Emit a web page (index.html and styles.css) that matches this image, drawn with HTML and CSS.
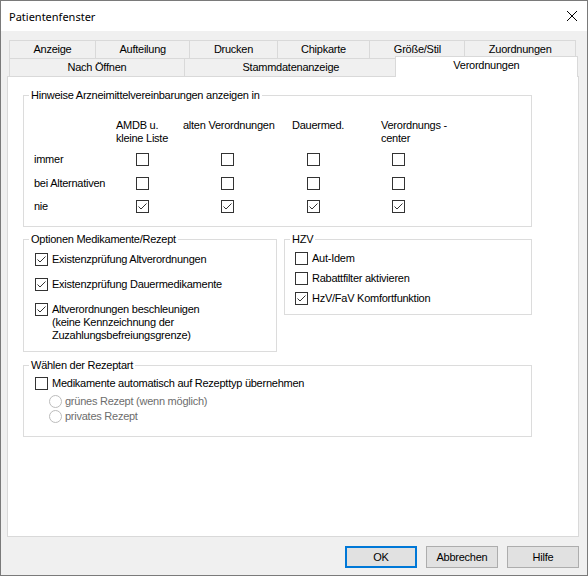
FILE: index.html
```html
<!DOCTYPE html>
<html>
<head>
  <title>Patientenfenster</title>
  <link rel="stylesheet" href="styles.css">
</head>
<body>
  <div class="window">
    <div class="titlebar">
      <span class="title">Patientenfenster</span>
      <svg class="close" viewBox="0 0 10 10"><path d="M0 0 L10 10 M10 0 L0 10"/></svg>
    </div>

    <div class="client">
      <div class="tabs">
        <div class="tab-row">
          <div class="tab">Anzeige</div>
          <div class="tab">Aufteilung</div>
          <div class="tab">Drucken</div>
          <div class="tab">Chipkarte</div>
          <div class="tab">Größe/Stil</div>
          <div class="tab">Zuordnungen</div>
        </div>
        <div class="tab-row">
          <div class="tab">Nach Öffnen</div>
          <div class="tab">Stammdatenanzeige</div>
          <div class="tab selected">Verordnungen</div>
        </div>
      </div>

      <div class="panel">
        <div class="sheet">
          <fieldset class="group">
            <legend>Hinweise Arzneimittelvereinbarungen anzeigen in</legend>
            <div class="matrix">
              <div></div>
              <div class="head">AMDB u.<br>kleine Liste</div>
              <div class="head">alten Verordnungen</div>
              <div class="head">Dauermed.</div>
              <div class="head">Verordnungs -<br>center</div>

              <div class="row-label">immer</div>
              <span class="cb c1"></span>
              <span class="cb c2"></span>
              <span class="cb c3"></span>
              <span class="cb c4"></span>

              <div class="row-label">bei Alternativen</div>
              <span class="cb c1"></span>
              <span class="cb c2"></span>
              <span class="cb c3"></span>
              <span class="cb c4"></span>

              <div class="row-label">nie</div>
              <span class="cb c1"><svg viewBox="0 0 11 11"><path d="M1.5 5.5 L4 8 L9.5 2.5"/></svg></span>
              <span class="cb c2"><svg viewBox="0 0 11 11"><path d="M1.5 5.5 L4 8 L9.5 2.5"/></svg></span>
              <span class="cb c3"><svg viewBox="0 0 11 11"><path d="M1.5 5.5 L4 8 L9.5 2.5"/></svg></span>
              <span class="cb c4"><svg viewBox="0 0 11 11"><path d="M1.5 5.5 L4 8 L9.5 2.5"/></svg></span>
            </div>
          </fieldset>

          <div class="split">
            <fieldset class="group optionen">
              <legend>Optionen Medikamente/Rezept</legend>
              <div class="opts">
                <label class="opt">
                  <span class="cb"><svg viewBox="0 0 11 11"><path d="M1.5 5.5 L4 8 L9.5 2.5"/></svg></span>
                  <span class="text">Existenzprüfung Altverordnungen</span>
                </label>
                <label class="opt">
                  <span class="cb"><svg viewBox="0 0 11 11"><path d="M1.5 5.5 L4 8 L9.5 2.5"/></svg></span>
                  <span class="text">Existenzprüfung Dauermedikamente</span>
                </label>
                <label class="opt">
                  <span class="cb"><svg viewBox="0 0 11 11"><path d="M1.5 5.5 L4 8 L9.5 2.5"/></svg></span>
                  <span class="text">Altverordnungen beschleunigen<br>(keine Kennzeichnung der<br>Zuzahlungsbefreiungsgrenze)</span>
                </label>
              </div>
            </fieldset>

            <fieldset class="group hzv">
              <legend>HZV</legend>
              <div class="opts tight">
                <label class="opt">
                  <span class="cb"></span>
                  <span class="text">Aut-Idem</span>
                </label>
                <label class="opt">
                  <span class="cb"></span>
                  <span class="text">Rabattfilter aktivieren</span>
                </label>
                <label class="opt">
                  <span class="cb"><svg viewBox="0 0 11 11"><path d="M1.5 5.5 L4 8 L9.5 2.5"/></svg></span>
                  <span class="text">HzV/FaV Komfortfunktion</span>
                </label>
              </div>
            </fieldset>
          </div>

          <fieldset class="group rezept">
            <legend>Wählen der Rezeptart</legend>
            <div class="opts rezept-opts">
              <label class="opt">
                <span class="cb"></span>
                <span class="text">Medikamente automatisch auf Rezepttyp übernehmen</span>
              </label>
              <div class="radios">
                <label class="opt">
                  <span class="rb"></span>
                  <span class="text dis">grünes Rezept (wenn möglich)</span>
                </label>
                <label class="opt">
                  <span class="rb"></span>
                  <span class="text dis">privates Rezept</span>
                </label>
              </div>
            </div>
          </fieldset>
        </div>
      </div>

      <div class="buttons">
        <button class="btn default">OK</button>
        <button class="btn">Abbrechen</button>
        <button class="btn">Hilfe</button>
      </div>
    </div>
  </div>
</body>
</html>
```

FILE: styles.css
```css
* { box-sizing: border-box; }
body {
  margin: 0;
  font-family: "Liberation Sans", Arial, sans-serif;
  font-size: 11px;
  line-height: 13px;
  letter-spacing: -0.25px;
  color: #000;
  background: #fff;
}
.window {
  width: 588px;
  height: 576px;
  border: 1px solid #7a7a7a;
  background: #f0f0f0;
  display: flex;
  flex-direction: column;
}
.titlebar {
  height: 30px;
  flex: none;
  background: #fff;
  display: flex;
  align-items: center;
  justify-content: space-between;
  padding: 0 10px 0 8px;
}
.titlebar .title {
  font-family: "Noto Sans", sans-serif;
  font-size: 11px;
  letter-spacing: 0;
}
.close {
  width: 10px;
  height: 10px;
  stroke: #000;
  stroke-width: 1;
  fill: none;
}
.client {
  flex: 1;
  display: flex;
  flex-direction: column;
  padding: 9px 8px 0 6px;
}

/* tabs */
.tabs { margin: 0 3px 0 2px; }
.tab-row {
  display: flex;
  height: 18px;
}
.tab {
  flex: 1 1 auto;
  border: 0 solid #d9d9d9;
  border-width: 1px 0 0 1px;
  background: #f0f0f0;
  text-align: center;
  white-space: nowrap;
  padding-top: 2px;
}
.tab:last-child { border-right-width: 1px; }
.tab.selected {
  background: #fff;
  height: 21px;
  margin: -2px -2px -1px -2px;
  border-width: 1px 1px 0 1px;
  position: relative;
  z-index: 1;
}

/* page */
.panel {
  height: 461px;
  flex: none;
  background: #fff;
  border: 1px solid #d9d9d9;
  padding: 12px 0 0 15px;
}
.sheet { width: 509px; }
.group {
  margin: 0;
  padding: 0;
  min-width: 0;
  border: 1px solid #dcdcdc;
}
.group legend {
  margin-left: 5px;
  padding: 0 2px;
}

.matrix {
  display: grid;
  grid-template-columns: 82px 67px 109px 89px 1fr;
  grid-template-rows: 23.5px 13px 13px 13px;
  row-gap: 10.5px;
  padding: 17px 0 13px 10px;
}
.matrix .head {
  align-self: start;
  white-space: nowrap;
}
.matrix .row-label { white-space: nowrap; }
.c1 { margin-left: 20px; }
.c2 { margin-left: 38px; }
.c3 { margin-left: 15px; }
.c4 { margin-left: 11px; }

.cb {
  display: block;
  flex: none;
  width: 13px;
  height: 13px;
  border: 1px solid #333;
  background: #fff;
}
.cb svg {
  display: block;
  width: 11px;
  height: 11px;
  fill: none;
  stroke: #333;
  stroke-width: 1;
}
.rb {
  display: block;
  flex: none;
  width: 13px;
  height: 13px;
  border: 1px solid #bcbcbc;
  border-radius: 50%;
  background: #fff;
}

.split {
  display: flex;
  align-items: flex-start;
  gap: 7px;
  margin-top: 6px;
}
.optionen { width: 254px; }
.hzv { width: 248px; }

.opts {
  display: flex;
  flex-direction: column;
  gap: 12px;
  padding: 7px 0 9px 11px;
}
.opts.tight {
  gap: 7px;
  padding: 6px 0 9px 10px;
}
.opt {
  display: flex;
  align-items: flex-start;
  white-space: nowrap;
}
.opt .text { margin-left: 4px; }

.rezept { margin-top: 7px; }
.rezept-opts {
  gap: 5px;
  padding: 5px 0 13px 11px;
}
.radios {
  display: flex;
  flex-direction: column;
  gap: 2px;
  margin-left: 14px;
}
.radios .text { margin-left: 3px; }
.dis { color: #6d6d6d; }

/* dialog buttons */
.buttons {
  display: flex;
  justify-content: flex-end;
  gap: 9px;
  margin-top: 9px;
}
.btn {
  width: 72px;
  height: 22px;
  padding: 0;
  border: 1px solid #adadad;
  background: #e1e1e1;
  color: #000;
  font: inherit;
  letter-spacing: inherit;
}
.btn.default { border: 2px solid #0078d7; }
```
